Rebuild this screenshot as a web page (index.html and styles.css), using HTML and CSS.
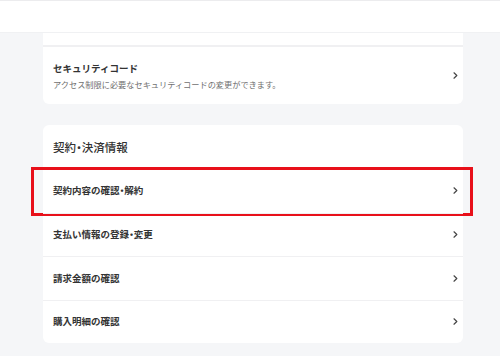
FILE: index.html
```html
<!DOCTYPE html>
<html lang="ja">
<head>
<meta charset="utf-8">
<link rel="stylesheet" href="styles.css">
</head>
<body>
<header class="topbar"></header>
<main class="content">
  <section class="card card-cut">
    <div class="row row-partial"></div>
    <a class="row row-tall">
      <div class="row-text">
        <div class="row-title">セキュリティコード</div>
        <div class="row-desc">アクセス制限に必要なセキュリティコードの変更ができます。</div>
      </div>
      <svg class="chev" width="5" height="7" viewBox="0 0 5 7"><path d="M1 0.8 L3.8 3.5 L1 6.2" fill="none" stroke="#444" stroke-width="1.2" stroke-linecap="round" stroke-linejoin="round"/></svg>
    </a>
  </section>
  <section class="card">
    <h2 class="card-heading">契約<span class="dot">・</span>決済情報</h2>
    <a class="row highlighted">
      <div class="row-title">契約内容の確認<span class="dot">・</span>解約</div>
      <svg class="chev" width="5" height="7" viewBox="0 0 5 7"><path d="M1 0.8 L3.8 3.5 L1 6.2" fill="none" stroke="#444" stroke-width="1.2" stroke-linecap="round" stroke-linejoin="round"/></svg>
    </a>
    <a class="row">
      <div class="row-title">支払い情報の登録<span class="dot">・</span>変更</div>
      <svg class="chev" width="5" height="7" viewBox="0 0 5 7"><path d="M1 0.8 L3.8 3.5 L1 6.2" fill="none" stroke="#444" stroke-width="1.2" stroke-linecap="round" stroke-linejoin="round"/></svg>
    </a>
    <a class="row">
      <div class="row-title">請求金額の確認</div>
      <svg class="chev" width="5" height="7" viewBox="0 0 5 7"><path d="M1 0.8 L3.8 3.5 L1 6.2" fill="none" stroke="#444" stroke-width="1.2" stroke-linecap="round" stroke-linejoin="round"/></svg>
    </a>
    <a class="row">
      <div class="row-title">購入明細の確認</div>
      <svg class="chev" width="5" height="7" viewBox="0 0 5 7"><path d="M1 0.8 L3.8 3.5 L1 6.2" fill="none" stroke="#444" stroke-width="1.2" stroke-linecap="round" stroke-linejoin="round"/></svg>
    </a>
  </section>
</main>
</body>
</html>
```

FILE: styles.css
```css
* { box-sizing: border-box; }
html, body {
  margin: 0;
  padding: 0;
  background: #f5f6f8;
  font-family: "Noto Sans CJK JP", "Noto Sans", sans-serif;
  color: #333;
}
.topbar {
  height: 33px;
  background: #fff;
  border-top: 1px solid #ececee;
  border-bottom: 1px solid #f0f1f3;
}
.content {
  padding: 0 37px 0 43px;
  display: flex;
  flex-direction: column;
  gap: 21px;
}
.card {
  background: #fff;
  border-radius: 6px;
  display: flex;
  flex-direction: column;
}
.card-cut {
  border-top-left-radius: 0;
  border-top-right-radius: 0;
}
.row {
  display: flex;
  align-items: center;
  justify-content: space-between;
  height: 43.5px;
  padding: 0 5px 0 10px;
  border-top: 1px solid #f0f0f2;
  position: relative;
  text-decoration: none;
  color: inherit;
}
.row-partial {
  height: 12px;
  border-top: none;
}
.row-tall {
  height: 59px;
  border-top: 2px solid #f0f0f2;
}
.row-text {
  display: flex;
  flex-direction: column;
  gap: 3px;
}
.row-title {
  font-size: 9.5px;
  font-weight: 700;
  color: #333;
  line-height: 13px;
}
.row-desc {
  font-size: 8.2px;
  color: #707070;
  line-height: 12px;
}
.dot {
  font-feature-settings: "palt";
}
.card-heading {
  margin: 0;
  height: 44px;
  padding: 0 10px;
  display: flex;
  align-items: center;
  font-size: 11.5px;
  font-weight: 500;
  color: #333;
}
.card-heading + .row {
  border-top: none;
}
.chev {
  display: block;
  flex: none;
}
.highlighted::after {
  content: "";
  position: absolute;
  left: -12px;
  right: -10px;
  top: -2px;
  bottom: -3px;
  border: 3px solid #e8101a;
  pointer-events: none;
}
```
